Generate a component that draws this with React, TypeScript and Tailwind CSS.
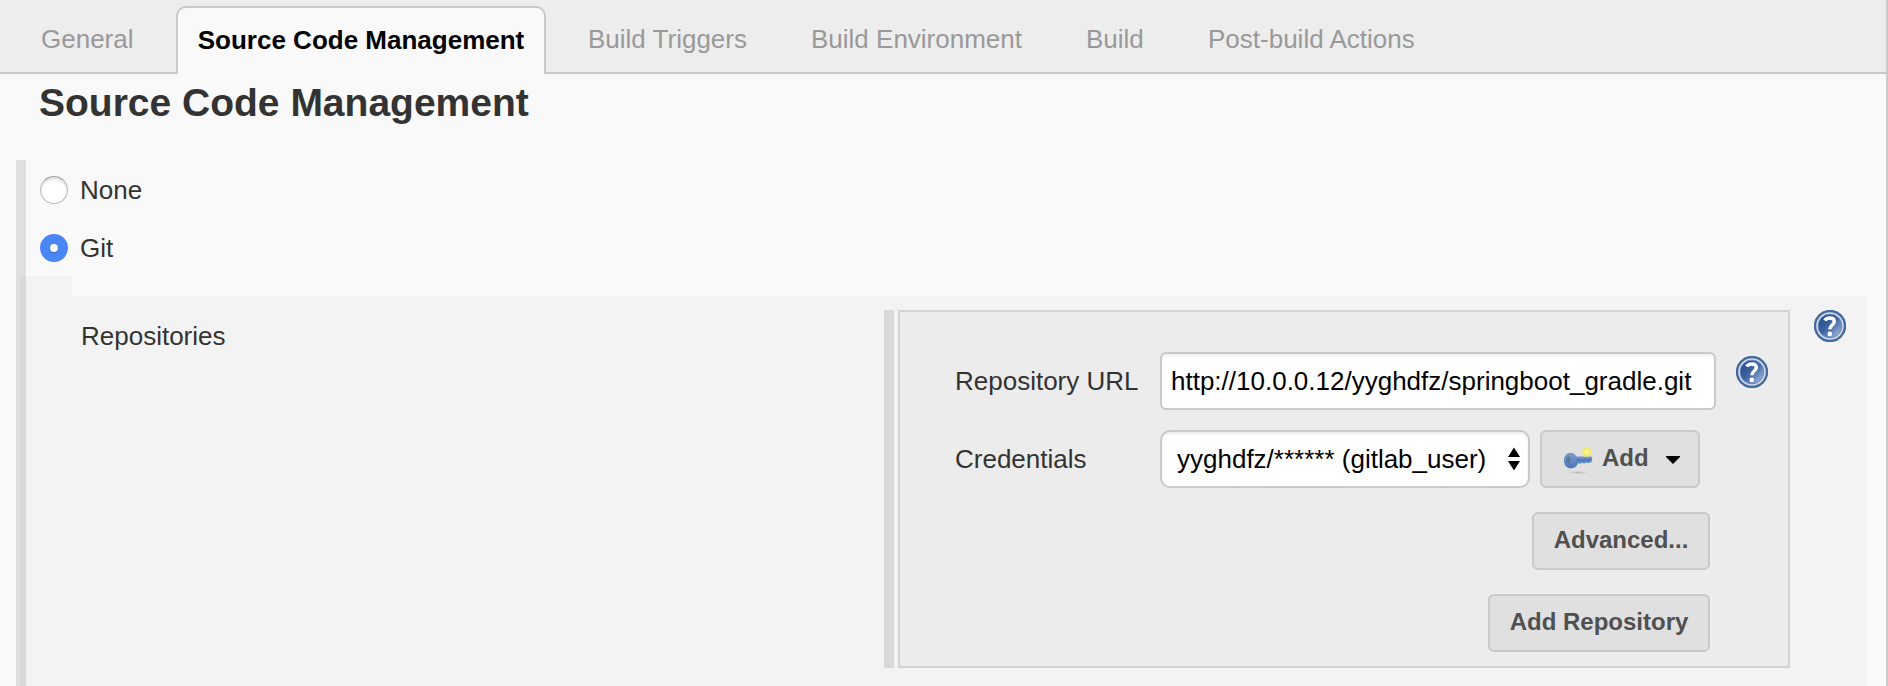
import React from 'react';

const TABS = [
  { label: 'General', cls: 'w-[132px]' },
  { label: 'Build Triggers', cls: 'w-[223px]' },
  { label: 'Build Environment', cls: 'w-[275px]' },
  { label: 'Build', cls: 'w-[122px]' },
  { label: 'Post-build Actions', cls: 'w-[240px]' },
];

function Tab({ label, cls }: { label: string; cls: string }) {
  return <button className={`shrink-0 pb-[5px] text-left whitespace-nowrap text-[#999] ${cls}`}>{label}</button>;
}

function HelpIcon({ id }: { id: string }) {
  return (
    <svg width="32" height="32" viewBox="0 0 32 32" className="shrink-0">
      <defs>
        <linearGradient id={id} x1="0.1" y1="0.1" x2="0.9" y2="0.9">
          <stop offset="0" stopColor="#234a8a" />
          <stop offset="0.5" stopColor="#4267a4" />
          <stop offset="1" stopColor="#9ab6db" />
        </linearGradient>
      </defs>
      <circle cx="16" cy="16" r="15" fill="#d3ddec" stroke="#45689f" strokeWidth="2.4" />
      <circle cx="16" cy="16" r="11.9" fill={`url(#${id})`} stroke="#6f8cb9" strokeWidth="1" />
      <path d="M10.800 10.600C11.800 8.500 13.700 7.900 15.700 7.900c2.900 0 4.600 1.400 4.600 3.700 0 3.300-4.500 3.600-4.500 7.600" fill="none" stroke="#fff" strokeWidth="3.500" />
      <rect x="13.700" y="21.700" width="4.200" height="4.200" rx="1.200" fill="#fff" />
    </svg>
  );
}

function KeyIcon() {
  return (
    <svg width="32" height="34" viewBox="0 0 32 34" className="shrink-0">
      <defs>
        <linearGradient id="key" x1="0" y1="0" x2="0" y2="1">
          <stop offset="0" stopColor="#7a9ccc" />
          <stop offset="1" stopColor="#4a77bb" />
        </linearGradient>
        <radialGradient id="spark">
          <stop offset="0" stopColor="#ffffc8" />
          <stop offset="0.4" stopColor="#f8f16c" />
          <stop offset="0.75" stopColor="#efe779" />
          <stop offset="1" stopColor="#efe779" stopOpacity="0" />
        </radialGradient>
        <radialGradient id="shade">
          <stop offset="0" stopColor="#b0b0b0" />
          <stop offset="1" stopColor="#dfdfdf" stopOpacity="0" />
        </radialGradient>
      </defs>
      <ellipse cx="16" cy="31.500" rx="13" ry="2" fill="url(#shade)" />
      <path d="M8.600 11.800c2.600 0 4.600 1.500 5.900 3.800H29c1 0 1.300.8 1.200 1.800l-.4 2.800c-.2.900-.9 1.400-1.900 1.400l-1.800.700-2-.7-2 .9-2-.7-2 .9-1.800-.7c-1.400 3.400-4.200 5.300-7.400 5.300-4.300 0-6.900-3.300-6.900-7.600 0-4.400 2.600-7.900 6.600-7.900z" fill="url(#key)" />
      <path d="M14.500 19h14.500" stroke="#4a73b2" strokeWidth="1.300" />
      <ellipse cx="6.500" cy="19" rx="2" ry="3.400" fill="#5d7597" />
      <circle cx="24.700" cy="11" r="5.500" fill="url(#spark)" />
    </svg>
  );
}

const BUTTON =
  'flex h-[58px] items-center rounded-[6px] border-2 border-[#c9c9c9] bg-[#e0e0e0] pb-[3px] text-[24px] font-bold whitespace-nowrap text-[#505050]';

export default function App() {
  return (
    <div className="flex h-[686px] w-[1888px] flex-col overflow-hidden border-r-2 border-[#ccc] bg-[#f9f9f9] font-['Liberation_Sans',Arial,sans-serif] text-[26px] leading-[30px] text-[#333]">
      <nav className="flex h-[74px] shrink-0 bg-[#ededed]">
        <div className="flex h-full w-[176px] items-center border-b-2 border-[#c9c9c9] pt-[11px] pl-[41px]">
          <Tab {...TABS[0]} />
        </div>
        <button className="mt-[6px] h-[68px] w-[370px] shrink-0 rounded-t-[10px] border-2 border-b-0 border-[#c9c9c9] bg-[#f9f9f9] pb-[3px] text-center font-bold whitespace-nowrap text-black">
          Source Code Management
        </button>
        <div className="flex h-full grow items-center border-b-2 border-[#c9c9c9] pt-[11px] pl-[42px]">
          {TABS.slice(1).map((t) => (
            <Tab key={t.label} {...t} />
          ))}
        </div>
      </nav>

      <h1 className="h-[86px] shrink-0 pt-[6px] pl-[39px] text-[39px] leading-[46px] font-bold">Source Code Management</h1>

      <div className="flex grow pl-[16px]">
        <div className="flex w-[10px] shrink-0 flex-col bg-[#dfdfdf] pt-[116px] pl-[4px]">
          <div className="grow bg-[#d9d9d9]" />
        </div>
        <div className="flex grow flex-col">
          <label className="mt-[16px] flex h-[28px] items-center pl-[14px]">
            <span className="mr-[12px] size-[28px] rounded-full border-[1.5px] border-[#bbb] border-t-[#a0a0a0] bg-white shadow-[inset_0_2px_3px_rgba(0,0,0,0.15)]" />
            <span className="pb-px">None</span>
          </label>
          <label className="mt-[30px] flex h-[28px] items-center pl-[14px]">
            <span className="mr-[12px] flex size-[28px] items-center justify-center rounded-full bg-[#4a87f5]">
              <span className="size-[8px] rounded-full bg-white shadow-[0_1px_2px_rgba(0,0,0,0.3)]" />
            </span>
            <span className="pb-px">Git</span>
          </label>
          <div className="mt-[14px] h-[20px] w-[46px] shrink-0 bg-[#f3f3f3]" />

          <div className="mr-[20px] flex grow bg-[#f3f3f3] pt-[14px]">
            <div className="w-[858px] shrink-0 pt-[11px] pl-[55px]">Repositories</div>
            <div className="mr-[4px] h-[358px] w-[10px] shrink-0 bg-[#d9d9d9]" />
            <section className="flex h-[358px] w-[892px] shrink-0 flex-col border-2 border-[#d3d3d3] bg-[#ececec] pt-[40px]">
              <div className="flex h-[58px] pl-[55px]">
                <span className="w-[205px] shrink-0 self-center">Repository URL</span>
                <div className="flex h-[58px] w-[556px] shrink-0 items-center rounded-[6px] border-2 border-[#c9c9c9] bg-white pl-[9px] text-black shadow-[inset_0_2px_2px_rgba(0,0,0,0.06)]">
                  http://10.0.0.12/yyghdfz/springboot_gradle.git
                </div>
                <div className="mt-[4px] ml-[20px]">
                  <HelpIcon id="help-url" />
                </div>
              </div>
              <div className="mt-[20px] flex h-[58px] pl-[55px]">
                <span className="w-[205px] shrink-0 self-center">Credentials</span>
                <div className="flex h-[58px] w-[370px] shrink-0 items-center justify-between rounded-[10px] border-2 border-[#c9c9c9] bg-white pr-[8px] pl-[15px] whitespace-nowrap text-black shadow-[inset_0_2px_3px_rgba(0,0,0,0.08)]">
                  <span>yyghdfz/****** (gitlab_user)</span>
                  <svg width="12" height="24" viewBox="0 0 12 24" className="shrink-0">
                    <path d="M6 0.500l6 9.500H0zM0 14h12L6 23.500z" fill="#000" />
                  </svg>
                </div>
                <button className={`${BUTTON} ml-[10px] w-[160px] shrink-0 pl-[20px]`}>
                  <KeyIcon />
                  <span className="ml-[8px]">Add</span>
                  <svg width="14" height="8" viewBox="0 0 14 8" className="mt-[5px] ml-[17px] shrink-0">
                    <path d="M0 0h14v1L7 8 0 1z" fill="#000" />
                  </svg>
                </button>
              </div>
              <div className="mt-[24px] flex flex-col items-end gap-[24px] pr-[78px]">
                <button className={`${BUTTON} w-[178px] justify-center`}>Advanced...</button>
                <button className={`${BUTTON} w-[222px] justify-center`}>Add Repository</button>
              </div>
            </section>
            <div className="ml-[24px]">
              <HelpIcon id="help-repos" />
            </div>
          </div>
        </div>
      </div>
    </div>
  );
}
